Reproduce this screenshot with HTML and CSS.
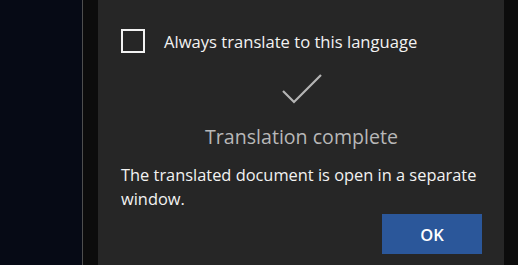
FILE: index.html
```html
<!DOCTYPE html>
<html lang="en">
  <head>
    <meta charset="UTF-8" />
    <meta name="viewport" content="width=device-width, initial-scale=1.0" />
    <title>Translation complete</title>
    <link rel="stylesheet" href="styles.css">
  </head>
  <body>
    <div class="sidebar"></div>

    <div class="backdrop">
      <div class="dialog">
        <label class="option">
          <span class="box"></span>
          <span>Always translate to this language</span>
        </label>

        <svg class="check" width="40" height="30" viewBox="0 0 40 30">
          <polyline points="1,17 12,28 39,1" fill="none" stroke="#b4b4b4" stroke-width="2.2" />
        </svg>

        <h2 class="status">Translation complete</h2>

        <p class="message">The translated document is open in a separate window.</p>

        <div class="actions">
          <button class="ok">OK</button>
        </div>
      </div>
    </div>
  </body>
</html>
```

FILE: styles.css
```css
body {
  margin: 0;
  height: 265px;
  display: flex;
  background-color: #0c0c0c;
  font-family: "Open Sans", "Noto Sans", sans-serif;
  overflow: hidden;
}

.sidebar {
  width: 82px;
  background-color: #060a15;
  border-right: 1px solid #4e4e4e;
}

.backdrop {
  flex: 1;
  padding: 0 14px 0 15px;
}

.dialog {
  height: 100%;
  background-color: #262626;
  padding: 29px 22px 0 23px;
  box-sizing: border-box;
  display: flex;
  flex-direction: column;
}

.option {
  display: flex;
  align-items: center;
  color: #f2f2f2;
  font-size: 16.6px;
}

.box {
  width: 24px;
  height: 24px;
  border: 2px solid #f2f2f2;
  box-sizing: border-box;
  margin-right: 19px;
}

.check {
  align-self: center;
  margin-top: 21px;
}

.status {
  margin: 19px 0 0;
  text-align: center;
  font-weight: normal;
  font-size: 19.6px;
  color: #b8b8b8;
}

.message {
  margin: 13px 0 0;
  font-size: 16.4px;
  line-height: 24px;
  color: #f2f2f2;
}

.actions {
  display: flex;
  justify-content: flex-end;
  margin-top: 3px;
}

.ok {
  width: 100px;
  height: 40px;
  border: none;
  background-color: #2b579a;
  color: #fff;
  font-family: inherit;
  font-size: 16.5px;
  font-weight: 600;
}
```
